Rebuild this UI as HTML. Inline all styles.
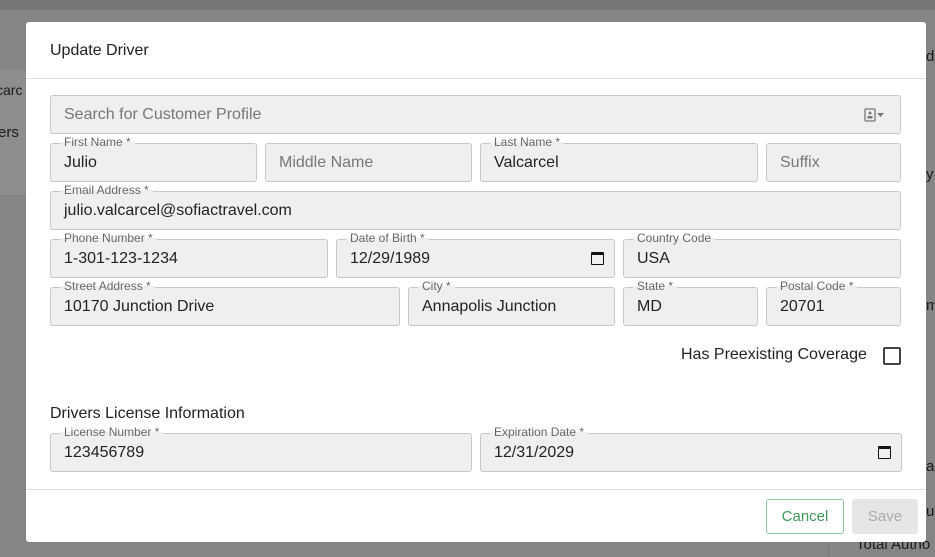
<!DOCTYPE html>
<html><head><style>
*{box-sizing:border-box;margin:0;padding:0}
body{width:935px;height:557px;overflow:hidden;position:relative;background:#858585;font-family:"Liberation Sans",sans-serif;color:#222}
.bg{position:absolute;color:#1a1a1a;font-size:15px}
.modal{position:absolute;left:26px;top:22px;width:900px;height:520px;background:#fff;border-radius:3px}
.f{position:absolute;height:39px;background:#efefef;border:1px solid #c6c6c6;border-radius:3px;font-size:16px;padding:0 13px;line-height:37px;color:#222}
.f.ph{color:#777}
.f .l{position:absolute;top:-9px;left:9px;font-size:12px;line-height:14px;color:#666;background:linear-gradient(#fff 50%,#efefef 50%);padding:0 4px}
.cal{position:absolute;right:10px;top:12px;width:13px;height:13px;border:1.5px solid #111;border-top-width:3px;border-radius:1px}
</style></head><body>
<div style="position:absolute;left:0;top:0;width:935px;height:10px;background:#777"></div>
<div style="position:absolute;left:0;top:70px;width:30px;height:125px;background:#8d8d8d"></div>
<div style="position:absolute;left:828px;top:22px;width:107px;height:535px;border-left:1px solid #777"></div>
<div class="bg" style="left:-4px;top:82px;font-size:14px">carc</div>
<div class="bg" style="left:-2px;top:124px">ers</div>
<div class="bg" style="left:926px;top:48px">d</div>
<div class="bg" style="left:926px;top:166px">y</div>
<div class="bg" style="left:926px;top:297px">m</div>
<div class="bg" style="left:926px;top:458px">a</div>
<div class="bg" style="left:926px;top:503px">u</div>
<div class="bg" style="left:856px;top:536px">Total Autho</div>
<div class="modal">
<div style="position:absolute;left:24px;top:20px;font-size:16px;color:#222">Update Driver</div>
<div style="position:absolute;left:0;top:56px;width:900px;height:1px;background:#e3e3e3"></div>
<div style="position:absolute;left:0;top:467px;width:900px;height:1px;background:#e3e3e3"></div>
</div>
<div class="f ph" style="left:50px;top:95px;width:851px">Search for Customer Profile
<svg style="position:absolute;right:14px;top:12px" width="22" height="14" viewBox="0 0 22 14"><rect x="1" y="1" width="10" height="12" rx="1" fill="none" stroke="#777" stroke-width="1.3"/><circle cx="6" cy="5" r="1.5" fill="#777"/><rect x="3.5" y="8" width="5" height="2.5" fill="#777"/><path d="M13 5h7l-3.5 4z" fill="#777"/></svg></div>
<div class="f" style="left:50px;top:143px;width:207px"><span class="l">First Name *</span>Julio</div>
<div class="f ph" style="left:265px;top:143px;width:207px">Middle Name</div>
<div class="f" style="left:480px;top:143px;width:278px"><span class="l">Last Name *</span>Valcarcel</div>
<div class="f ph" style="left:766px;top:143px;width:135px">Suffix</div>
<div class="f" style="left:50px;top:191px;width:851px"><span class="l">Email Address *</span>julio.valcarcel@sofiactravel.com</div>
<div class="f" style="left:50px;top:239px;width:278px"><span class="l">Phone Number *</span>1-301-123-1234</div>
<div class="f" style="left:336px;top:239px;width:279px"><span class="l">Date of Birth *</span>12/29/1989<span class="cal"></span></div>
<div class="f" style="left:623px;top:239px;width:278px"><span class="l">Country Code</span>USA</div>
<div class="f" style="left:50px;top:287px;width:350px"><span class="l">Street Address *</span>10170 Junction Drive</div>
<div class="f" style="left:408px;top:287px;width:207px"><span class="l">City *</span>Annapolis Junction</div>
<div class="f" style="left:623px;top:287px;width:135px"><span class="l">State *</span>MD</div>
<div class="f" style="left:766px;top:287px;width:135px"><span class="l">Postal Code *</span>20701</div>
<div style="position:absolute;left:681px;top:346px;font-size:16px;color:#222">Has Preexisting Coverage</div>
<div style="position:absolute;left:883px;top:347px;width:18px;height:18px;border:2px solid #444;border-radius:2px"></div>
<div style="position:absolute;left:50px;top:405px;font-size:16px;color:#222">Drivers License Information</div>
<div class="f" style="left:50px;top:433px;width:422px"><span class="l">License Number *</span>123456789</div>
<div class="f" style="left:480px;top:433px;width:422px"><span class="l">Expiration Date *</span>12/31/2029<span class="cal"></span></div>
<div style="position:absolute;left:766px;top:499px;width:78px;height:35px;border:1px solid #8cc79c;border-radius:3px;color:#3d9a58;font-size:15px;text-align:center;line-height:33px">Cancel</div>
<div style="position:absolute;left:852px;top:499px;width:66px;height:35px;background:#e6e6e6;border-radius:3px;color:#aaa;font-size:15px;text-align:center;line-height:35px">Save</div>
</body></html>
